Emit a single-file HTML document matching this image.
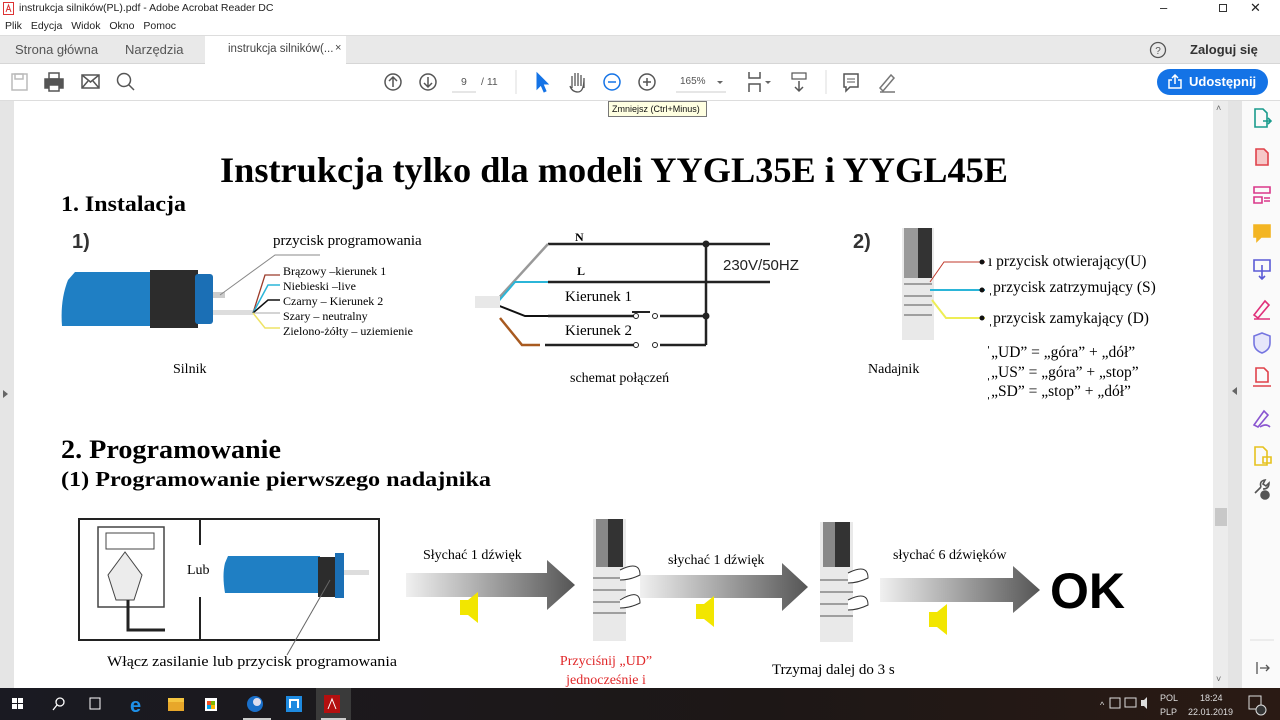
<!DOCTYPE html>
<html><head><meta charset="utf-8"><style>
*{margin:0;padding:0;box-sizing:border-box}
body{width:1280px;height:720px;overflow:hidden;position:relative;background:#fff;font-family:"Liberation Sans",sans-serif;}
.a{position:absolute}
.t{font-size:11px;color:#222;white-space:nowrap}
</style></head><body>
<!-- title bar -->
<div class="a" style="left:0;top:0;width:1280px;height:17px;background:#fff"></div>
<svg class="a" style="left:3px;top:2px" width="12" height="13"><rect x="0.5" y="0.5" width="10" height="12" fill="#fff" stroke="#d33"/><path d="M3 10 L5.5 3 L8 10 M4 7.5 H7" stroke="#d33" fill="none"/></svg>
<div class="a t" style="left:19px;top:2px;font-size:10.5px">instrukcja silników(PL).pdf - Adobe Acrobat Reader DC</div>
<div class="a t" style="left:1160px;top:0px;font-size:13px">–</div>
<div class="a" style="left:1219px;top:4px;width:8px;height:8px;border:1px solid #333"></div>
<div class="a t" style="left:1250px;top:0px;font-size:13px">✕</div>
<!-- menu -->
<div class="a t" style="left:5px;top:20px;font-size:10.5px;word-spacing:6px">Plik Edycja Widok Okno Pomoc</div>
<!-- tabs -->
<div class="a" style="left:0;top:35px;width:1280px;height:29px;background:#e9e9e9;border-top:1px solid #ddd;border-bottom:1px solid #d6d6d6"></div>
<div class="a" style="left:205px;top:36px;width:141px;height:29px;background:#fff"></div>
<div class="a t" style="left:15px;top:42px;font-size:13px;color:#555">Strona główna</div>
<div class="a t" style="left:125px;top:42px;font-size:13px;color:#555">Narzędzia</div>
<div class="a t" style="left:228px;top:43px;font-size:11.5px;color:#444">instrukcja silników(...</div>
<div class="a t" style="left:335px;top:42px;font-size:11px;color:#444">×</div>
<svg class="a" style="left:1149px;top:41px" width="18" height="18"><circle cx="9" cy="9" r="7.5" fill="none" stroke="#555" stroke-width="1.3"/><text x="9" y="13" font-size="10" text-anchor="middle" fill="#555" font-family="Liberation Sans">?</text></svg>
<div class="a t" style="left:1190px;top:42px;font-size:13px;color:#333;font-weight:bold">Zaloguj się</div>
<!-- toolbar -->
<div class="a" style="left:0;top:100px;width:1280px;height:1px;background:#ddd"></div>
<svg class="a" style="left:0;top:64px" width="1280" height="36" fill="none" stroke="#555" stroke-width="1.5">
<rect x="12" y="10" width="15" height="16" stroke="#bbb"/><rect x="15" y="10" width="8" height="5" stroke="#bbb"/>
<rect x="45" y="15" width="18" height="9" fill="#555"/><rect x="49" y="9" width="10" height="6"/><rect x="49" y="21" width="10" height="6" fill="#fff"/>
<rect x="82" y="11" width="17" height="13"/><path d="M82 11 L90.5 18 L99 11 M82 24 L88 17 M99 24 L93 17"/>
<circle cx="124" cy="16" r="6.5"/><path d="M129 21 L134 26"/>
<circle cx="393" cy="18" r="8"/><path d="M393 23 V13 M389 17 L393 13 L397 17"/>
<circle cx="428" cy="18" r="8"/><path d="M428 13 V23 M424 19 L428 23 L432 19"/>
<path d="M452 28 H476" stroke="#ccc" stroke-width="1"/>
<path d="M516 6 V30" stroke="#ddd" stroke-width="1"/>
<path d="M537 9 L537 25 L541 21 L544 28 L546 27 L543 20 L548 20 Z" fill="#1473e6" stroke="#1473e6" stroke-width="1"/>
<path d="M572 24 V12 M575 22 V9 M578 22 V9 M581 22 V11 M584 24 V14 Q584 28 578 28 Q572 28 570 22" stroke-width="1.3"/>
<circle cx="612" cy="18" r="8" stroke="#1473e6"/><path d="M608 18 H616" stroke="#1473e6"/>
<circle cx="647" cy="18" r="8"/><path d="M643 18 H651 M647 14 V22"/>
<path d="M676 28 H726" stroke="#ccc" stroke-width="1"/>
<path d="M717 17 L720 20 L723 17 Z" fill="#666" stroke="none"/>
<path d="M749 8 V14 H760 V8 M749 28 V20 H760 V28" /><path d="M765 17 L768 20 L771 17 Z" fill="#666" stroke="none"/>
<rect x="792" y="9" width="14" height="6" stroke-width="1.2"/><path d="M799 17 V27 M795 23 L799 27 L803 23"/>
<path d="M826 6 V30" stroke="#ddd" stroke-width="1"/>
<path d="M844 10 H858 V23 H850 L846 27 V23 H844 Z"/><path d="M847 15 H855 M847 18 H855" stroke-width="1"/>
<path d="M880 24 L891 11 L894 14 L883 27 Z M880 28 H895" stroke="#777"/>
</svg>
<div class="a t" style="left:461px;top:76px;font-size:10.5px;color:#555">9</div>
<div class="a t" style="left:481px;top:76px;font-size:10.5px;color:#555">/ 11</div>
<div class="a t" style="left:680px;top:76px;font-size:10px;color:#555">165%</div>
<div class="a" style="left:1157px;top:69px;width:111px;height:26px;background:#1473e6;border-radius:13px"></div>
<svg class="a" style="left:1167px;top:74px" width="16" height="16" fill="none" stroke="#fff" stroke-width="1.5"><path d="M5 6 H2 V14 H14 V6 H11 M8 10 V1 M5 4 L8 1 L11 4"/></svg>
<div class="a t" style="left:1189px;top:74px;font-size:13px;color:#fff;font-weight:bold">Udostępnij</div>
<!-- doc area -->
<div class="a" style="left:0;top:101px;width:14px;height:587px;background:#e5e5e5"></div>
<div class="a" style="left:3px;top:390px;width:0;height:0;border-top:4px solid transparent;border-bottom:4px solid transparent;border-left:5px solid #666"></div>
<div class="a" style="left:1213px;top:101px;width:15px;height:587px;background:#ececec"></div>
<div class="a" style="left:1215px;top:508px;width:12px;height:18px;background:#c8c8c8"></div>
<div class="a t" style="left:1216px;top:103px;font-size:9px;color:#666">˄</div>
<div class="a t" style="left:1216px;top:674px;font-size:9px;color:#666">˅</div>
<div class="a" style="left:1228px;top:101px;width:14px;height:587px;background:#e4e4e4"></div>
<div class="a" style="left:1232px;top:387px;width:0;height:0;border-top:4px solid transparent;border-bottom:4px solid transparent;border-right:5px solid #666"></div>
<div class="a" style="left:1242px;top:101px;width:38px;height:587px;background:#fafafa"></div>
<svg class="a" style="left:1250px;top:105px" width="24" height="580" fill="none" stroke-width="1.6">
<path d="M5 4 H13 L17 8 V22 H5 Z" stroke="#1a9b8c"/><path d="M13 16 H21 M18 13 L21 16 L18 19" stroke="#1a9b8c"/>
<path d="M6 44 H14 L18 48 V60 H6 Z" stroke="#e0424b" fill="#f6c8c8"/>
<path d="M4 82 H20 V88 H4 Z M4 92 H12 V98 H4 Z M14 93 H20 M14 96 H20" stroke="#d9378a"/>
<path d="M4 120 H20 V132 H11 L7 136 V132 H4 Z" fill="#f3b523" stroke="#f3b523"/>
<path d="M4 155 H20 V166 H4 Z M12 160 V174 M9 171 L12 174 L15 171" stroke="#5b5bd6"/>
<path d="M4 210 L15 196 L19 200 L8 213 Z M4 214 H20" stroke="#e0307a"/>
<path d="M12 228 L20 231 V238 Q20 245 12 248 Q4 245 4 238 V231 Z" stroke="#7575e0" fill="#e6e6fa"/>
<path d="M6 263 H14 L18 267 V277 H6 Z M3 281 H21" stroke="#e0424b"/>
<path d="M4 320 L14 306 L18 310 L8 322 Z M10 322 Q16 318 20 322" stroke="#8a55d0"/>
<path d="M5 342 H13 L17 346 V360 H5 Z M13 352 H21 V358 H13 Z" stroke="#e6c21f"/>
<path d="M5 388 L11 382 M11 382 Q9 376 15 375 L13 379 L16 381 L19 378 Q19 384 13 384" stroke="#555"/><circle cx="15" cy="390" r="4" fill="#555" stroke="#555"/>
<path d="M0 535 H24" stroke="#ddd" stroke-width="1"/>
<path d="M7 557 V569 M10 563 H19 M16 560 L19 563 L16 566" stroke="#555" stroke-width="1.3"/>
</svg>

<!-- page content -->
<svg class="a" style="left:0;top:0" width="1213" height="688" font-family="Liberation Serif, serif">
<text x="614" y="182" font-size="36" font-weight="bold" text-anchor="middle" textLength="788" lengthAdjust="spacingAndGlyphs">Instrukcja tylko dla modeli YYGL35E i YYGL45E</text>
<text x="61" y="211" font-size="22" font-weight="bold" textLength="125" lengthAdjust="spacingAndGlyphs">1. Instalacja</text>
<text x="72" y="248" font-size="20" font-weight="bold" font-family="Liberation Sans" fill="#333">1)</text>
<!-- motor -->
<path d="M68 280 Q60 300 62 326 L155 326 L155 272 L75 272 Z" fill="#1f7fc4"/>
<rect x="150" y="270" width="48" height="58" fill="#2c2c2c"/>
<rect x="195" y="274" width="18" height="50" rx="3" fill="#1b6fb5"/>
<rect x="213" y="292" width="12" height="6" fill="#ccc"/><rect x="213" y="310" width="40" height="5" fill="#ddd"/>
<path d="M220 295 L275 255 H320" stroke="#888" fill="none"/>
<path d="M253 313 L265 275 L280 275" stroke="#9b3b2a" fill="none" stroke-width="1.3"/>
<path d="M253 313 L268 285 L280 285" stroke="#2bb5d8" fill="none" stroke-width="1.5"/>
<path d="M253 313 L268 300 L280 300" stroke="#111" fill="none" stroke-width="1.5"/>
<path d="M253 313 H280" stroke="#aaa" fill="none"/>
<path d="M253 313 L265 328 L280 328" stroke="#eee366" fill="none" stroke-width="1.5"/>
<text x="273" y="245" font-size="15">przycisk programowania</text>
<g font-size="12"><text x="283" y="275">Brązowy –kierunek 1</text><text x="283" y="290">Niebieski –live</text><text x="283" y="305">Czarny – Kierunek 2</text><text x="283" y="320">Szary – neutralny</text><text x="283" y="335">Zielono-żółty – uziemienie</text></g>
<text x="173" y="373" font-size="14">Silnik</text>
<!-- schematic -->
<g stroke="#222" fill="none" stroke-width="2.5">
<path d="M548 244 H770 M548 282 H770 M706 244 V345 M548 316 H635 M660 316 H706 M545 345 H635 M660 345 H706"/>
<path d="M632 312 H650" stroke-width="2"/>
</g>
<circle cx="706" cy="244" r="3.5" fill="#222"/><circle cx="706" cy="316" r="3.5" fill="#222"/>
<circle cx="636" cy="316" r="2.5" fill="#fff" stroke="#222"/><circle cx="655" cy="316" r="2.5" fill="#fff" stroke="#222"/>
<circle cx="636" cy="345" r="2.5" fill="#fff" stroke="#222"/><circle cx="655" cy="345" r="2.5" fill="#fff" stroke="#222"/>
<path d="M497 300 L548 244" stroke="#999" stroke-width="2.5"/>
<path d="M497 303 L515 282 H548" stroke="#2bb5d8" stroke-width="2" fill="none"/>
<path d="M497 305 L525 316 H548" stroke="#111" stroke-width="2" fill="none"/>
<path d="M500 318 L522 345 H540" stroke="#a85a20" stroke-width="2.5" fill="none"/>
<rect x="475" y="296" width="25" height="12" fill="#e8e8e8"/>
<text x="575" y="241" font-size="12" font-weight="bold">N</text>
<text x="577" y="275" font-size="12" font-weight="bold">L</text>
<text x="565" y="301" font-size="15">Kierunek 1</text>
<text x="565" y="335" font-size="15">Kierunek 2</text>
<text x="723" y="270" font-size="15" font-family="Liberation Sans" fill="#222">230V/50HZ</text>
<text x="570" y="382" font-size="14">schemat połączeń</text>
<!-- remote -->
<text x="853" y="248" font-size="20" font-weight="bold" font-family="Liberation Sans" fill="#333">2)</text>
<rect x="902" y="228" width="32" height="112" fill="#e9e9e9"/>
<rect x="904" y="228" width="14" height="50" fill="#999"/><rect x="918" y="228" width="14" height="50" fill="#333"/>
<path d="M904 284 H932 M904 296 H932 M904 305 H932 M904 315 H932" stroke="#555"/>
<path d="M930 282 L944 262 H985" stroke="#c0392b" fill="none"/>
<path d="M930 290 H985" stroke="#2bb5d8" stroke-width="2" fill="none"/>
<path d="M932 300 L946 318 H985" stroke="#eeee55" stroke-width="2" fill="none"/>
<circle cx="982" cy="262" r="2.5" fill="#111"/><circle cx="982" cy="290" r="2.5" fill="#111"/><circle cx="982" cy="318" r="2.5" fill="#111"/>
<g font-size="15.5"><text x="988" y="266">ı przycisk otwierający(U)</text><text x="988" y="292">ˌprzycisk zatrzymujący (S)</text><text x="988" y="323">ˌprzycisk zamykający (D)</text>
<text x="986" y="357">ˈ„UD” = „góra” + „dół”</text><text x="986" y="377">ˌ„US” = „góra” + „stop”</text><text x="986" y="396">ˌ„SD” = „stop” + „dół”</text></g>
<text x="868" y="373" font-size="14">Nadajnik</text>
<text x="61" y="458" font-size="26" font-weight="bold" textLength="220" lengthAdjust="spacingAndGlyphs">2. Programowanie</text>
<text x="61" y="486" font-size="21" font-weight="bold" textLength="430" lengthAdjust="spacingAndGlyphs">(1) Programowanie pierwszego nadajnika</text>
<!-- programming diagram -->
<rect x="79" y="519" width="300" height="121" fill="#fff" stroke="#222" stroke-width="2"/>
<path d="M200 519 V545 M200 597 V640" stroke="#222" stroke-width="2"/>
<rect x="98" y="527" width="66" height="80" fill="#fff" stroke="#444" stroke-width="1.5"/>
<rect x="106" y="533" width="48" height="16" fill="#fff" stroke="#444"/>
<path d="M125 552 L108 575 L116 600 H134 L142 575 Z" fill="#ececec" stroke="#444"/>
<path d="M128 600 V630 H165" stroke="#222" stroke-width="3" fill="none"/>
<text x="187" y="574" font-size="14">Lub</text>
<path d="M225 563 Q222 575 225 593 L320 593 V556 L228 556 Z" fill="#1f7fc4"/>
<rect x="318" y="557" width="22" height="40" fill="#2c2c2c"/>
<rect x="335" y="553" width="9" height="45" fill="#1b6fb5"/>
<rect x="344" y="570" width="25" height="5" fill="#ddd"/>
<path d="M330 580 L287 655" stroke="#666"/>
<text x="107" y="666" font-size="15" textLength="290" lengthAdjust="spacingAndGlyphs">Włącz zasilanie lub przycisk programowania</text>
<defs><linearGradient id="g" x1="0" x2="1"><stop offset="0" stop-color="#f0f0f0"/><stop offset="1" stop-color="#555"/></linearGradient></defs>
<path d="M406 573 H547 V560 L575 585 L547 610 V597 H406 Z" fill="url(#g)"/>
<path d="M640 575 H782 V563 L808 587 L782 611 V598 H640 Z" fill="url(#g)"/>
<path d="M880 578 H1013 V566 L1040 590 L1013 613 V602 H880 Z" fill="url(#g)"/>
<g fill="#f2e600"><path d="M460 600 H468 L478 592 V623 L468 615 H460 Z"/><path d="M696 604 H704 L714 596 V627 L704 619 H696 Z"/><path d="M929 612 H937 L947 604 V635 L937 627 H929 Z"/></g>
<g font-size="14"><text x="423" y="559">Słychać 1 dźwięk</text><text x="668" y="564">słychać 1 dźwięk</text><text x="893" y="559">słychać 6 dźwięków</text></g>
<text x="1050" y="608" font-size="50" font-weight="bold" font-family="Liberation Sans">OK</text>
<rect x="593" y="519" width="33" height="122" fill="#e9e9e9"/><rect x="596" y="519" width="12" height="48" fill="#888"/><rect x="608" y="519" width="15" height="48" fill="#333"/>
<path d="M593 578 H626 M593 590 H626 M593 602 H626 M593 613 H626" stroke="#555"/>
<path d="M620 570 Q640 560 640 575 Q630 580 620 580 M620 600 Q640 588 640 603 Q630 608 620 608" stroke="#333" fill="#fff"/>
<rect x="820" y="522" width="33" height="120" fill="#e9e9e9"/><rect x="823" y="522" width="12" height="45" fill="#888"/><rect x="835" y="522" width="15" height="45" fill="#333"/>
<path d="M820 580 H853 M820 592 H853 M820 604 H853 M820 616 H853" stroke="#555"/>
<path d="M848 573 Q868 563 868 578 Q858 583 848 583 M848 600 Q868 590 868 605 Q858 610 848 610" stroke="#333" fill="#fff"/>
<text x="606" y="665" font-size="14" fill="#e0282a" text-anchor="middle">Przyciśnij „UD”</text>
<text x="606" y="684" font-size="14" fill="#e0282a" text-anchor="middle">jednocześnie i</text>
<text x="772" y="674" font-size="15">Trzymaj dalej do 3 s</text>
</svg>
<!-- tooltip -->
<div class="a" style="left:608px;top:101px;width:99px;height:16px;background:#ffffe1;border:1px solid #777;font-size:9px;padding:2px 0 0 3px;white-space:nowrap;color:#111">Zmniejsz (Ctrl+Minus)</div>
<!-- taskbar -->
<div class="a" style="left:0;top:688px;width:1280px;height:32px;background:linear-gradient(90deg,#1a1a22,#1d1716 60%,#2a1a14)"></div>
<svg class="a" style="left:0;top:688px" width="1280" height="32">
<g fill="#fff"><rect x="12" y="10" width="5" height="5"/><rect x="18" y="10" width="5" height="5"/><rect x="12" y="16" width="5" height="5"/><rect x="18" y="16" width="5" height="5"/></g>
<circle cx="60" cy="14" r="4" fill="none" stroke="#fff" stroke-width="1.3"/><path d="M57 17 L53 22" stroke="#fff" stroke-width="1.3"/>
<rect x="90" y="10" width="10" height="11" fill="none" stroke="#fff"/>
<text x="130" y="24" font-size="20" fill="#1e90e8" font-weight="bold" font-family="Liberation Sans">e</text>
<rect x="168" y="10" width="16" height="13" fill="#f5c540"/><rect x="168" y="14" width="16" height="9" fill="#e8a72a"/>
<rect x="205" y="10" width="12" height="13" fill="#fff"/><rect x="207" y="13" width="4" height="4" fill="#f25022"/><rect x="211" y="13" width="4" height="4" fill="#7fba00"/><rect x="207" y="17" width="4" height="4" fill="#00a4ef"/><rect x="211" y="17" width="4" height="4" fill="#ffb900"/>
<circle cx="255" cy="16" r="8" fill="#1a6fc9"/><circle cx="257" cy="14" r="4" fill="#dde"/>
<rect x="286" y="8" width="16" height="16" fill="#1e8ae0"/><path d="M290 20 V12 H298 V20" stroke="#fff" fill="none" stroke-width="2"/>
<rect x="243" y="30" width="28" height="2" fill="#ccc"/>
<rect x="316" y="0" width="35" height="32" fill="#3a3a3a"/><rect x="321" y="30" width="25" height="2" fill="#ccc"/>
<rect x="324" y="7" width="16" height="18" fill="#b40f0f"/><path d="M328 21 L332 11 L336 21" stroke="#fff" fill="none"/>
<g fill="#ddd" font-size="9" font-family="Liberation Sans"><text x="1100" y="20">^</text><text x="1160" y="13">POL</text><text x="1160" y="27">PLP</text><text x="1200" y="13">18:24</text><text x="1188" y="27">22.01.2019</text></g>
<rect x="1110" y="10" width="10" height="10" fill="none" stroke="#ddd"/><rect x="1125" y="10" width="11" height="9" fill="none" stroke="#ddd"/><path d="M1141 12 H1144 L1147 9 V21 L1144 18 H1141 Z" fill="#ddd"/>
<rect x="1249" y="8" width="12" height="13" fill="none" stroke="#ddd"/><circle cx="1261" cy="22" r="5" fill="#333" stroke="#ddd"/>
</svg>
</body></html>
